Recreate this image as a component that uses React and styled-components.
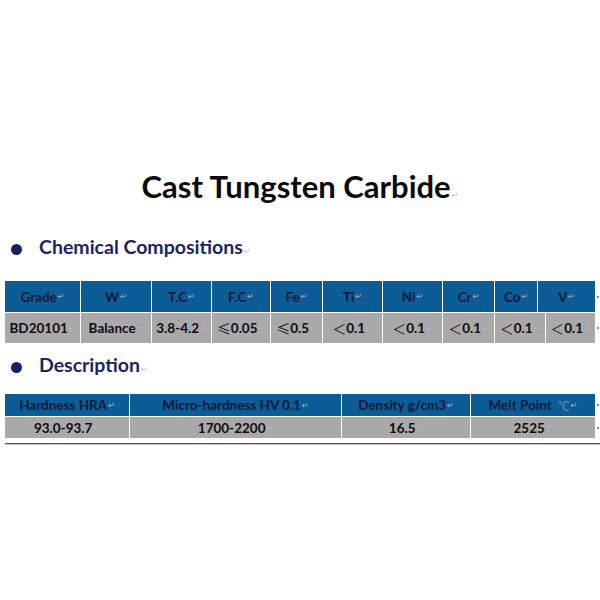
import React from "react";
import styled, { createGlobalStyle } from "styled-components";

const Global = createGlobalStyle`
  html, body { margin: 0; padding: 0; background: #fff; }
  body { font-family: Lato, "Open Sans", "Noto Sans CJK SC", sans-serif; width: 600px; height: 600px; overflow: hidden; }
`;

const Page = styled.div`
  width: 600px;
  height: 600px;
  display: flex;
  flex-direction: column;
  padding-top: 168px;
  box-sizing: border-box;
`;

const Title = styled.h1`
  margin: 0;
  text-align: center;
  font-family: Lato, sans-serif;
  font-weight: 700;
  font-size: 31px;
  line-height: 36px;
  color: #0a0a0a;
`;

const Section = styled.div`
  display: flex;
  align-items: center;
  gap: 17px;
  padding-left: 11px;
  margin-top: ${(p) => p.$mt}px;
  height: 26px;
`;

const Bullet = styled.span`
  width: 11px;
  height: 11px;
  border-radius: 50%;
  background: #17215e;
  flex: none;
`;

const Heading = styled.h2`
  margin: 0;
  font-family: Lato, sans-serif;
  font-weight: 700;
  font-size: 19.5px;
  line-height: 26px;
  color: #1a2466;
`;

const Mark = styled.span`
  font-size: 8px;
  color: #b9b9b9;
  font-weight: 400;
  margin-left: 1px;
  font-family: "DejaVu Sans", sans-serif;
`;

const Table = styled.div`
  margin-top: ${(p) => p.$mt}px;
  display: flex;
  flex-direction: column;
  gap: 1px;
  padding-left: 5px;
`;

const RowWrap = styled.div`
  display: flex;
  align-items: center;
`;

const Row = styled.div`
  width: 590px;
  display: grid;
  grid-template-columns: ${(p) => p.$cols};
  column-gap: 1px;
  background: #fff;
  height: ${(p) => p.$h}px;
`;

const Cell = styled.div`
  display: flex;
  align-items: center;
  justify-content: center;
  background: ${(p) => (p.$head ? "#0b5c97" : "#a9a9a9")};
  color: ${(p) => (p.$head ? "#0e1a38" : "#0d0d0d")};
  font-family: Lato, sans-serif;
  font-weight: 700;
  font-size: 13.5px;
  white-space: nowrap;
  overflow: hidden;
`;

const Sym = styled.span`
  font-family: "Noto Sans CJK SC", sans-serif;
  font-weight: 400;
  font-size: 14px;
  color: #222;
`;

const Celsius = styled.span`
  font-family: "Noto Sans CJK SC", sans-serif;
  font-weight: 400;
  color: #6d8fb4;
  margin-left: 6px;
  font-size: 12px;
`;

const EndDot = styled.span`
  width: 2px;
  height: 2px;
  margin-left: 2px;
  background: #888;
  flex: none;
`;

const Rule = styled.div`
  margin-top: 5px;
  margin-left: 5px;
  height: 1px;
  background: #555;
  border-bottom: 1px solid #c8c8c8;
`;

const t1Head = "75px 70px 59px 58px 51px 59px 59px 51px 42px 57px";
const t1Data = "75px 70px 59px 58px 51px 59px 59px 51px 50px 49px";
const t2 = "124px 211px 128px 124px";

const heads1 = ["Grade", "W", "T.C", "F.C", "Fe", "Ti", "Ni", "Cr", "Co", "V"];

const le = (v) => (
  <>
    <Sym>≤</Sym>
    {v}
  </>
);
const lt = (v) => (
  <>
    <Sym>＜</Sym>
    {v}
  </>
);

const data1 = [
  "BD20101",
  "Balance",
  "3.8-4.2",
  le("0.05"),
  le("0.5"),
  lt("0.1"),
  lt("0.1"),
  lt("0.1"),
  lt("0.1"),
  lt("0.1"),
];

export default function App() {
  return (
    <>
      <Global />
      <Page>
        <Title>
          Cast Tungsten Carbide<Mark>↵</Mark>
        </Title>
        <Section $mt={22}>
          <Bullet />
          <Heading>
            Chemical Compositions<Mark>↵</Mark>
          </Heading>
        </Section>
        <Table $mt={19}>
          <RowWrap>
            <Row $cols={t1Head} $h={31}>
              {heads1.map((h) => (
                <Cell $head key={h}>
                  {h}
                  <Mark>↵</Mark>
                </Cell>
              ))}
            </Row>
            <EndDot />
          </RowWrap>
          <RowWrap>
            <Row $cols={t1Data} $h={30}>
              {data1.map((d, i) => (
                <Cell key={i}>
                  {d}
                  <Mark>↵</Mark>
                </Cell>
              ))}
            </Row>
            <EndDot />
          </RowWrap>
        </Table>
        <Section $mt={11}>
          <Bullet />
          <Heading>
            Description<Mark>↵</Mark>
          </Heading>
        </Section>
        <Table $mt={14}>
          <RowWrap>
            <Row $cols={t2} $h={22}>
              <Cell $head>
                Hardness HRA<Mark>↵</Mark>
              </Cell>
              <Cell $head>
                Micro-hardness HV 0.1<Mark>↵</Mark>
              </Cell>
              <Cell $head>
                Density g/cm3<Mark>↵</Mark>
              </Cell>
              <Cell $head>
                Melt Point<Celsius>℃</Celsius>
                <Mark>↵</Mark>
              </Cell>
            </Row>
            <EndDot />
          </RowWrap>
          <RowWrap>
            <Row $cols={t2} $h={21}>
              <Cell>
                93.0-93.7<Mark>↵</Mark>
              </Cell>
              <Cell>
                1700-2200 <Mark>↵</Mark>
              </Cell>
              <Cell>
                16.5 <Mark>↵</Mark>
              </Cell>
              <Cell>
                2525<Mark>↵</Mark>
              </Cell>
            </Row>
            <EndDot />
          </RowWrap>
        </Table>
        <Rule />
      </Page>
    </>
  );
}
